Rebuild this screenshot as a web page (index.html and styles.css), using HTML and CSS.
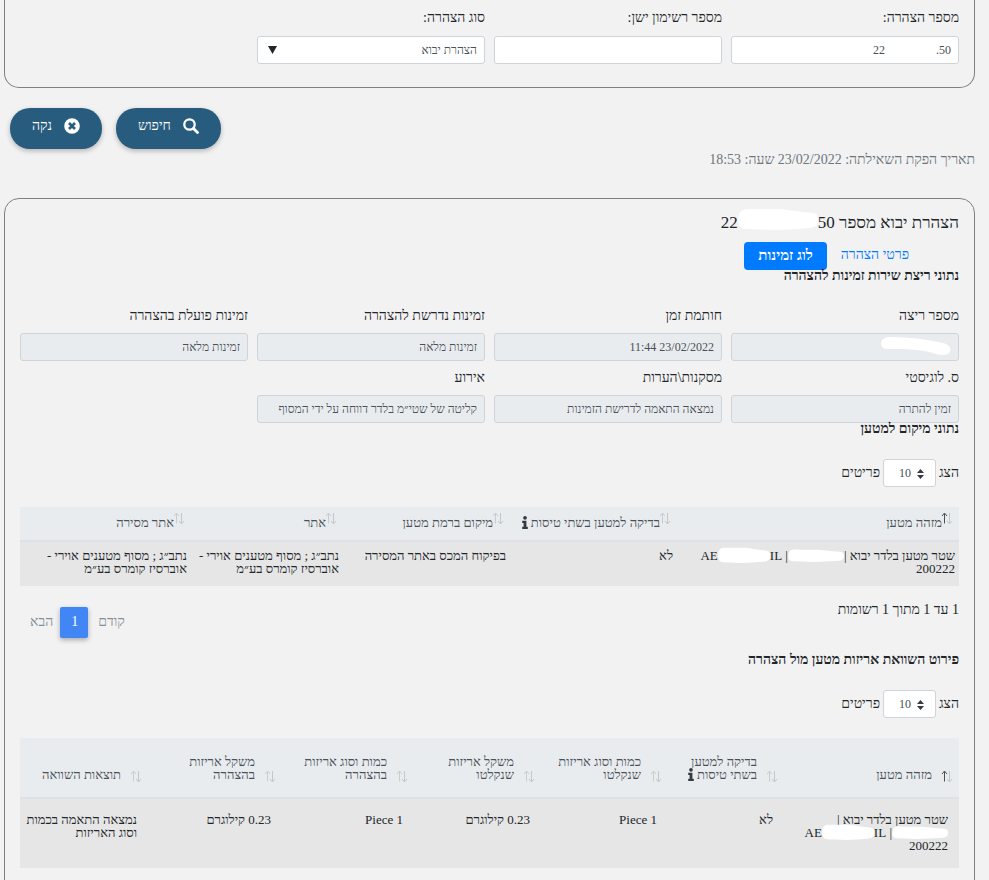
FILE: index.html
```
<!DOCTYPE html>
<html lang="he" dir="rtl">
<head>
  <meta charset="UTF-8">
  <meta name="viewport" content="width=device-width, initial-scale=1.0">
  <title>הצהרת יבוא</title>
  <link rel="stylesheet" href="styles.css">
</head>
<body>

  <svg class="defs" aria-hidden="true">
    <symbol id="sort" viewBox="0 0 12 13">
      <path d="M3.500 11.500V1.500M1 4l2.500-3L6 4" class="up"/>
      <path d="M8.500 1v10.500M6 9l2.500 3L11 9"/>
    </symbol>
    <symbol id="info" viewBox="0 0 6 14">
      <circle cx="3" cy="2" r="2"/>
      <path d="M0 5h4.500v6.500H6V14H0v-2.500h1.500v-4H0z"/>
    </symbol>
    <symbol id="updown" viewBox="0 0 7 10">
      <path d="M0 4l3.500-4L7 4zM0 6l3.500 4L7 6z"/>
    </symbol>
    <symbol id="blob" viewBox="0 0 80 20" preserveAspectRatio="none">
      <path d="M1 6C3 0 9 1 17 1L43 1L68 4C77 4 80 5 80 10C80 16 78 17 73 18L60 19L38 20L8 19C1 19 -1 14 1 6z"/>
    </symbol>
  </svg>

  <form class="card search-card">
    <div class="fields">
      <div class="field">
        <label for="declNum">מספר הצהרה:</label>
        <input type="text" id="declNum" value="50.&nbsp;&nbsp;&nbsp;&nbsp;&nbsp;&nbsp;&nbsp;&nbsp;&nbsp;&nbsp;&nbsp;&nbsp;&nbsp;&nbsp;&nbsp;&nbsp;&nbsp;22">
      </div>
      <div class="field">
        <label for="oldNum">מספר רשימון ישן:</label>
        <input type="text" id="oldNum">
      </div>
      <div class="field">
        <label for="declType">סוג הצהרה:</label>
        <div class="select-wrap">
          <select id="declType">
            <option>הצהרת יבוא</option>
          </select>
          <svg class="caret" viewBox="0 0 9 8"><path d="M0 0h9L4.500 8z"/></svg>
        </div>
      </div>
    </div>
  </form>

  <div class="actions">
    <button type="button" class="btn">
      <svg class="btn-icon" viewBox="0 0 16 16"><circle cx="6.500" cy="6.500" r="5.200" fill="none" stroke="#fff" stroke-width="2.300"/><path d="M10.500 10.500l4 4" stroke="#fff" stroke-width="2.800" stroke-linecap="round"/></svg>
      חיפוש
    </button>
    <button type="button" class="btn">
      <svg class="btn-icon" viewBox="0 0 16 16"><circle cx="8" cy="8" r="7.800" fill="#fff"/><path d="M5 5l6 6M11 5l-6 6" stroke="#285c7e" stroke-width="2.600"/></svg>
      נקה
    </button>
  </div>
  <p class="query-date">תאריך הפקת השאילתה: 23/02/2022 שעה: 18:53</p>

  <main class="card result-card">
    <h2>הצהרת יבוא מספר 50<svg class="blob blob-title"><use href="#blob"/></svg>22</h2>
    <nav class="tabs">
      <a href="#details">פרטי הצהרה</a>
      <a href="#log" class="active">לוג זמינות</a>
    </nav>

    <h3>נתוני ריצת שירות זמינות להצהרה</h3>
    <div class="fields">
      <div class="field">
        <label for="runNum">מספר ריצה</label>
        <div class="select-wrap">
          <input type="text" id="runNum" readonly>
          <svg class="run-blob" viewBox="0 0 70 18"><path d="M0 6C1 1 5 0 11 0C28 0 45 2 62 6C69 8 71 12 68 16C65 19 60 18 55 17C40 12 26 12 8 12C2 12 0 10 0 6z"/></svg>
        </div>
      </div>
      <div class="field">
        <label for="stamp">חותמת זמן</label>
        <input type="text" id="stamp" value="23/02/2022 11:44" readonly>
      </div>
      <div class="field">
        <label for="required">זמינות נדרשת להצהרה</label>
        <input type="text" id="required" value="זמינות מלאה" readonly>
      </div>
      <div class="field">
        <label for="actual">זמינות פועלת בהצהרה</label>
        <input type="text" id="actual" value="זמינות מלאה" readonly>
      </div>
      <div class="field">
        <label for="logistic">ס. לוגיסטי</label>
        <input type="text" id="logistic" value="זמין להתרה" readonly>
      </div>
      <div class="field">
        <label for="notes">מסקנות\הערות</label>
        <input type="text" id="notes" value="נמצאה התאמה לדרישת הזמינות" readonly>
      </div>
      <div class="field">
        <label for="event">אירוע</label>
        <input type="text" id="event" value="קליטה של שטי״מ בלדר דווחה על ידי המסוף" readonly>
      </div>
    </div>

    <h3>נתוני מיקום למטען</h3>
    <div class="length">
      <label for="len1">הצג</label>
      <div class="select-wrap">
        <select id="len1"><option>10</option></select>
        <svg class="updown"><use href="#updown"/></svg>
      </div>
      <span>פריטים</span>
    </div>
    <table class="grid location">
      <colgroup>
        <col class="l1"><col class="l2"><col class="l3"><col class="l4"><col class="l5">
      </colgroup>
      <thead>
        <tr>
          <th class="sorted"><svg class="sort"><use href="#sort"/></svg>מזהה מטען</th>
          <th><svg class="sort"><use href="#sort"/></svg>בדיקה למטען בשתי טיסות <svg class="info"><use href="#info"/></svg></th>
          <th><svg class="sort"><use href="#sort"/></svg>מיקום ברמת מטען</th>
          <th><svg class="sort"><use href="#sort"/></svg>אתר</th>
          <th><svg class="sort"><use href="#sort"/></svg>אתר מסירה</th>
        </tr>
      </thead>
      <tbody>
        <tr>
          <td>שטר מטען בלדר יבוא |<svg class="blob blob-id"><use href="#blob"/></svg>| <bdo dir="ltr">AE<svg class="blob blob-code"><use href="#blob"/></svg>IL</bdo><br>200222</td>
          <td>לא</td>
          <td>בפיקוח המכס באתר המסירה</td>
          <td>נתב״ג ; מסוף מטענים אוירי -<br>אוברסיז קומרס בע״מ</td>
          <td>נתב״ג ; מסוף מטענים אוירי -<br>אוברסיז קומרס בע״מ</td>
        </tr>
      </tbody>
    </table>
    <div class="table-foot">
      <span>1 עד 1 מתוך 1 רשומות</span>
      <div class="pager">
        <a href="#prev">קודם</a>
        <a href="#page1" class="current">1</a>
        <a href="#next">הבא</a>
      </div>
    </div>

    <h3>פירוט השוואת אריזות מטען מול הצהרה</h3>
    <div class="length">
      <label for="len2">הצג</label>
      <div class="select-wrap">
        <select id="len2"><option>10</option></select>
        <svg class="updown"><use href="#updown"/></svg>
      </div>
      <span>פריטים</span>
    </div>
    <table class="grid packages">
      <colgroup>
        <col class="p1"><col class="p2"><col class="p3"><col class="p4"><col class="p5"><col class="p6"><col class="p7">
      </colgroup>
      <thead>
        <tr>
          <th class="sorted"><svg class="sort"><use href="#sort"/></svg>מזהה מטען</th>
          <th><svg class="sort"><use href="#sort"/></svg>בדיקה למטען<br>בשתי טיסות <svg class="info"><use href="#info"/></svg></th>
          <th><svg class="sort"><use href="#sort"/></svg>כמות וסוג אריזות<br>שנקלטו</th>
          <th><svg class="sort"><use href="#sort"/></svg>משקל אריזות<br>שנקלטו</th>
          <th><svg class="sort"><use href="#sort"/></svg>כמות וסוג אריזות<br>בהצהרה</th>
          <th><svg class="sort"><use href="#sort"/></svg>משקל אריזות<br>בהצהרה</th>
          <th><svg class="sort"><use href="#sort"/></svg>תוצאות השוואה</th>
        </tr>
      </thead>
      <tbody>
        <tr>
          <td>שטר מטען בלדר יבוא |<br><svg class="blob blob-id"><use href="#blob"/></svg>| <bdo dir="ltr">AE<svg class="blob blob-code"><use href="#blob"/></svg>IL</bdo><br>200222</td>
          <td>לא</td>
          <td><bdo dir="ltr">Piece 1</bdo></td>
          <td>0.23 קילוגרם</td>
          <td><bdo dir="ltr">Piece 1</bdo></td>
          <td>0.23 קילוגרם</td>
          <td>נמצאה התאמה בכמות<br>וסוג האריזות</td>
        </tr>
      </tbody>
    </table>
  </main>

</body>
</html>
```
FILE: styles.css
```
* {
  box-sizing: border-box;
}
html {
  overflow: hidden;
}
body {
  height: 100vh;
  margin: 0;
  padding: 0 14px 0 4px;
  overflow: hidden;
  background: #f2f2f2;
  color: #212529;
  font-family: "Liberation Serif", "Times New Roman", serif;
  font-size: 14px;
  line-height: 20px;
}
a {
  color: #007bff;
  text-decoration: none;
}
.defs {
  position: absolute;
  width: 0;
  height: 0;
}

.card {
  padding: 0 15px;
  border: 1px solid #808080;
  border-radius: 15px;
}
.search-card {
  padding-top: 8px;
  padding-bottom: 23px;
  border-top: 0;
  border-radius: 0 0 15px 15px;
}
.result-card {
  padding-top: 13px;
  padding-bottom: 40px;
}

/* form fields */
.fields {
  display: grid;
  grid-template-columns: repeat(4, 1fr);
  gap: 7px 9px;
}
.field label {
  display: block;
  margin-bottom: 7px;
}
.search-card .field label {
  margin-bottom: 8px;
}
.field input,
.select-wrap select {
  display: block;
  width: 100%;
  height: 28px;
  padding: 0 7px;
  border: 1px solid #ced4da;
  border-radius: 3px;
  background: #fff;
  color: #495057;
  font-family: inherit;
  font-size: 12px;
  appearance: none;
}
.field input[readonly] {
  background: #e9ecef;
}
.select-wrap {
  position: relative;
}
.caret {
  position: absolute;
  top: 10px;
  left: 11px;
  width: 9px;
  height: 8px;
  fill: #212529;
}
.run-blob {
  position: absolute;
  top: 4px;
  right: 8px;
  width: 70px;
  height: 18px;
  fill: #fff;
}

.actions {
  display: flex;
  justify-content: flex-end;
  gap: 14px;
  margin-top: 20px;
  padding-left: 6px;
}
.btn {
  display: flex;
  align-items: center;
  gap: 12px;
  height: 41px;
  padding: 0 22px 5px;
  border: 0;
  border-radius: 20px;
  background: #285c7e;
  color: #fff;
  font-family: inherit;
  font-size: 14px;
  box-shadow: 0 2px 5px rgba(0, 0, 0, 0.26);
  cursor: pointer;
}
.btn-icon {
  width: 16px;
  height: 16px;
}
.query-date {
  margin: 1px 0 28px;
  color: #6c757d;
}

h2 {
  margin: 0 0 8px;
  font-size: 17px;
  font-weight: normal;
  line-height: 22px;
}
h3 {
  margin: 0 0 24px;
  font-size: 14px;
  line-height: 12px;
}
.tabs {
  display: flex;
  padding-right: 36px;
  line-height: 26px;
}
.tabs a {
  height: 28px;
  padding: 0 14px;
  border-radius: 4px;
}
.tabs .active {
  background: #007bff;
  color: #fff;
  font-size: 15px;
  font-weight: bold;
}

/* redaction strokes */
.blob {
  margin: -8px 0 -4px;
  vertical-align: middle;
  fill: #fff;
}
.blob-title {
  width: 80px;
  height: 22px;
  margin: -11px 0 -1px;
}
.blob-id {
  width: 56px;
  height: 13px;
}
.blob-code {
  width: 52px;
  height: 16px;
}

/* tables */
.length {
  display: flex;
  align-items: center;
  gap: 3px;
  margin-bottom: 20px;
}
.length .select-wrap {
  width: 53px;
}
.length select {
  padding: 0 24px 0 8px;
}
.updown {
  position: absolute;
  top: 10px;
  right: 12px;
  width: 7px;
  height: 10px;
  fill: #343a40;
}
.grid {
  width: 100%;
  border-collapse: separate;
  border-spacing: 0;
  table-layout: fixed;
  font-size: 13px;
  line-height: 13px;
}
.grid th {
  position: relative;
  border-bottom: 2px solid #dee2e6;
  background: #e9ecef;
  color: #495057;
  font-weight: normal;
  text-align: right;
  vertical-align: bottom;
  white-space: nowrap;
}
.grid td {
  background: #e6e6e6;
  text-align: right;
  vertical-align: top;
  white-space: nowrap;
}
.location th {
  height: 35px;
  padding: 0 17px 11px 0;
}
.location td {
  height: 44px;
  padding: 7px 4px 0 0;
}
.packages th {
  height: 61px;
  padding: 0 27px 16px 0;
}
.packages td {
  height: 69px;
  padding: 14px 11px 0 0;
}
.l1 { width: 282px; }
.l2, .l3 { width: 167px; }
.l4 { width: 152px; }
.l5 { width: 171px; }
.p1 { width: 175px; }
.p2 { width: 116px; }
.p3, .p4 { width: 127px; }
.p5 { width: 132px; }
.p6 { width: 134px; }
.p7 { width: 128px; }
.sort {
  --up: #c9cdd1;
  position: absolute;
  top: 5px;
  right: 6px;
  width: 12px;
  height: 13px;
  fill: none;
  stroke: #c3c7cb;
}
.up {
  stroke: var(--up);
}
.packages .sort {
  top: auto;
  bottom: 14px;
}
.sorted .sort {
  --up: #495057;
}
.info {
  width: 6px;
  height: 13px;
  margin: -2px 0;
  fill: #343a40;
}

.table-foot {
  display: flex;
  justify-content: space-between;
  margin: 21px 0 16px;
  line-height: 6px;
}
.pager {
  display: flex;
  line-height: 29px;
}
.pager a {
  height: 31px;
  padding: 0 10px;
  color: #868e96;
}
.pager .current {
  width: 28px;
  margin-left: -3px;
  border-radius: 2px;
  background: #4285f4;
  color: #fff;
  box-shadow: 0 2px 5px rgba(0, 0, 0, 0.3);
}
```
